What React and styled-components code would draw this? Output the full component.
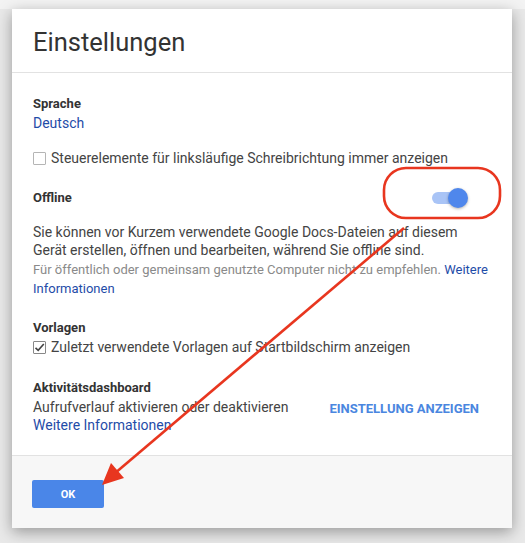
import React from 'react';
import styled, { createGlobalStyle } from 'styled-components';

const GlobalStyle = createGlobalStyle`
  html, body {
    margin: 0;
    padding: 0;
  }
  body {
    width: 525px;
    height: 543px;
    overflow: hidden;
    font-family: Roboto, "Liberation Sans", Arial, sans-serif;
    background: #ebebeb;
  }
`;

function Checkbox({ checked }) {
  return (
    <Box $checked={checked}>
      {checked && (
        <svg width="13" height="13" viewBox="0 0 13 13">
          <path d="M2.5 6.8 L5.2 9.4 L10.8 3" fill="none" stroke="#444" strokeWidth="1.6" />
        </svg>
      )}
    </Box>
  );
}

function Toggle({ on }) {
  return (
    <Switch>
      <Track $on={on} />
      <Knob $on={on} />
    </Switch>
  );
}

export default function App() {
  return (
    <>
      <GlobalStyle />
      <Page>
        <Dialog>
          <Header>
            <Title>Einstellungen</Title>
          </Header>

          <Body>
            <Section>
              <Heading>Sprache</Heading>
              <Link>Deutsch</Link>
              <CheckRow $top={17}>
                <Checkbox />
                <span>Steuerelemente für linksläufige Schreibrichtung immer anzeigen</span>
              </CheckRow>
            </Section>

            <Section $top={21}>
              <HeadRow>
                <Heading>Offline</Heading>
                <Toggle on />
              </HeadRow>
              <Text>
                Sie können vor Kurzem verwendete Google Docs-Dateien auf diesem
                Gerät erstellen, öffnen und bearbeiten, während Sie offline sind.
              </Text>
              <Hint>
                Für öffentlich oder gemeinsam genutzte Computer nicht zu empfehlen.{' '}
                <HintLink>Weitere</HintLink> <HintLink>Informationen</HintLink>
              </Hint>
            </Section>

            <Section $top={20}>
              <Heading>Vorlagen</Heading>
              <CheckRow $top={0}>
                <Checkbox checked />
                <span>Zuletzt verwendete Vorlagen auf Startbildschirm anzeigen</span>
              </CheckRow>
            </Section>

            <Section $top={22}>
              <Heading>Aktivitätsdashboard</Heading>
              <ActionRow>
                <div>
                  <Text>Aufrufverlauf aktivieren oder deaktivieren</Text>
                  <Link>Weitere Informationen</Link>
                </div>
                <FlatButton>Einstellung anzeigen</FlatButton>
              </ActionRow>
            </Section>
          </Body>

          <Footer>
            <PrimaryButton>OK</PrimaryButton>
          </Footer>
        </Dialog>

        <Annotation width="525" height="543" viewBox="0 0 525 543">
          <rect x="384" y="168" width="116" height="50" rx="22" fill="none" stroke="#e8361f" strokeWidth="2.6" />
          <line x1="404" y1="228" x2="114" y2="474" stroke="#e8361f" strokeWidth="2.6" />
          <polygon points="102,485 111,463 124,478" fill="#e8361f" />
        </Annotation>
      </Page>
    </>
  );
}

const Page = styled.div`
  position: relative;
  width: 525px;
  height: 543px;
  box-sizing: border-box;
  padding: 9px 13px 0 12px;
  background:
    linear-gradient(#f3f3f3 0 9px, transparent 9px),
    #e9e9e9;
`;

const Dialog = styled.div`
  width: 500px;
  background: #fff;
  box-shadow: 0 4px 14px rgba(0, 0, 0, 0.35);
  display: flex;
  flex-direction: column;
`;

const Header = styled.div`
  height: 64px;
  box-sizing: border-box;
  padding: 18px 21px 0;
  border-bottom: 1px solid #e2e2e2;
`;

const Title = styled.h1`
  margin: 0;
  font-size: 25.5px;
  font-weight: 400;
  color: #333;
  line-height: 30px;
`;

const Body = styled.div`
  padding: 21px 21px 21px;
  display: flex;
  flex-direction: column;
`;

const Section = styled.div`
  display: flex;
  flex-direction: column;
  margin-top: ${({ $top = 0 }) => $top}px;
`;

const Heading = styled.div`
  font-size: 13px;
  font-weight: 700;
  color: #333;
  line-height: 20px;
`;

const HeadRow = styled.div`
  display: flex;
  align-items: center;
  justify-content: space-between;
  height: 20px;
  margin-bottom: 15px;
`;

const Link = styled.div`
  font-size: 14px;
  color: #1f4ca8;
  line-height: 18px;
`;

const Text = styled.div`
  font-size: 14px;
  color: #444;
  line-height: 18px;
`;

const Hint = styled.div`
  font-size: 13px;
  color: #8a8a8a;
  line-height: 19px;
  margin-top: 1px;
`;

const HintLink = styled.span`
  color: #1f4ca8;
`;

const CheckRow = styled.label`
  display: flex;
  align-items: center;
  gap: 5px;
  margin-top: ${({ $top }) => $top}px;
  font-size: 14px;
  color: #444;
  line-height: 18px;
`;

const Box = styled.span`
  width: 11px;
  height: 11px;
  border: 1px solid ${({ $checked }) => ($checked ? '#888' : '#b5b5b5')};
  border-radius: 1px;
  display: inline-flex;
  align-items: center;
  justify-content: center;
  flex-shrink: 0;
  svg {
    margin: -1px;
  }
`;

const Switch = styled.span`
  position: relative;
  width: 38px;
  height: 22px;
  margin-right: 21px;
`;

const Track = styled.span`
  position: absolute;
  left: 0;
  top: 5px;
  width: 30px;
  height: 12px;
  border-radius: 6px;
  background: ${({ $on }) => ($on ? '#a9c4f6' : '#bdbdbd')};
`;

const Knob = styled.span`
  position: absolute;
  top: 1px;
  left: ${({ $on }) => ($on ? '16px' : '0')};
  width: 20px;
  height: 20px;
  border-radius: 50%;
  background: ${({ $on }) => ($on ? '#4f87ec' : '#f1f1f1')};
  box-shadow: 0 1px 3px rgba(0, 0, 0, 0.3);
`;

const ActionRow = styled.div`
  display: flex;
  align-items: center;
  justify-content: space-between;
  padding-right: 12px;
`;

const FlatButton = styled.button`
  border: none;
  background: none;
  padding: 0;
  font-family: inherit;
  font-size: 13px;
  font-weight: 700;
  text-transform: uppercase;
  color: #4a86e0;
  cursor: pointer;
  margin-bottom: 16px;
`;

const Footer = styled.div`
  background: #f7f7f7;
  border-top: 1px solid #e2e2e2;
  height: 73px;
  box-sizing: border-box;
  padding: 24px 20px 0;
`;

const PrimaryButton = styled.button`
  width: 72px;
  height: 28px;
  border: none;
  border-radius: 2px;
  background: #4a86e8;
  color: #fff;
  font-family: inherit;
  font-size: 11px;
  font-weight: 700;
  cursor: pointer;
`;

const Annotation = styled.svg`
  position: absolute;
  left: 0;
  top: 0;
  pointer-events: none;
`;
